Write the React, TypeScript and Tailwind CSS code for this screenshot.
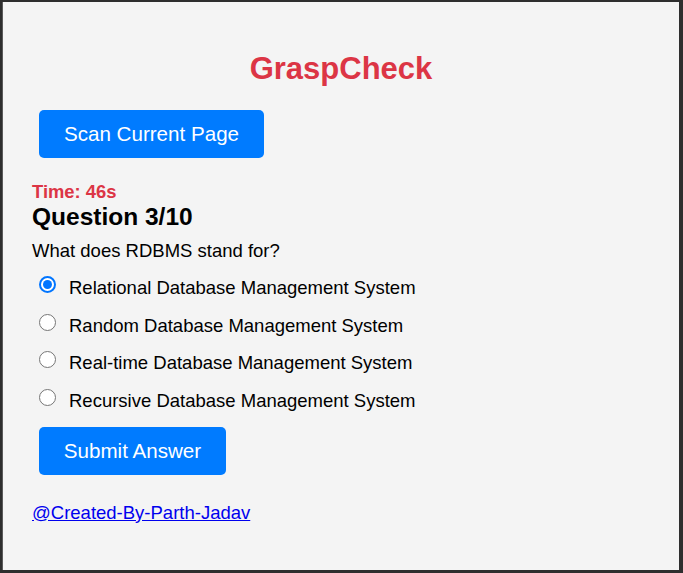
import React from "react";

const options = [
  "Relational Database Management System",
  "Random Database Management System",
  "Real-time Database Management System",
  "Recursive Database Management System",
];

export default function App() {
  return (
    <div
      className="w-[683px] h-[573px] bg-[#2e2e2e] pt-[2px] pl-[2px] pr-[4px] pb-[3px] overflow-hidden"
      style={{ fontFamily: '"Liberation Sans", Arial, sans-serif' }}
    >
      <div className="w-full h-full bg-[#f4f4f4] border-l border-[#5a5a5a] flex flex-col pl-[29px]">
        <h1 className="mt-[50px] h-[34px] leading-[34px] text-[31px] font-bold text-[#dc3545] text-center pr-[29px]">
          GraspCheck
        </h1>
        <button className="mt-[24px] ml-[7px] w-[225px] h-[48px] rounded-[5px] bg-[#007bff] text-white text-[20.6px] leading-[24px] flex items-center justify-center">
          Scan Current Page
        </button>
        <div className="mt-[23px] h-[21px] leading-[21px] text-[18.4px] font-bold text-[#dc3545]">
          Time: 46s
        </div>
        <div className="h-[29px] leading-[29px] text-[24.5px] font-bold text-black">
          Question 3/10
        </div>
        <div className="mt-[9px] h-[21px] leading-[21px] text-[18.5px] text-black">
          What does RDBMS stand for?
        </div>
        <div className="mt-[16px] flex flex-col gap-[16.6px]">
          {options.map((o, i) => (
            <div key={o} className="flex items-start h-[21px]">
              {i === 0 ? (
                <span className="mt-[-1px] ml-[7px] w-[17px] h-[17px] shrink-0 rounded-full border-[2px] border-[#0075ff] bg-white flex items-center justify-center">
                  <span className="w-[9px] h-[9px] rounded-full bg-[#0075ff]" />
                </span>
              ) : (
                <span className="mt-[-1px] ml-[7px] w-[17px] h-[17px] shrink-0 rounded-full border-[1.5px] border-[#767676] bg-white" />
              )}
              <span className="ml-[13px] leading-[21px] text-[18.5px] text-black whitespace-nowrap">
                {o}
              </span>
            </div>
          ))}
        </div>
        <button className="mt-[16px] ml-[7px] w-[187px] h-[48px] rounded-[5px] bg-[#007bff] text-white text-[20.6px] leading-[24px] flex items-center justify-center">
          Submit Answer
        </button>
        <a
          href="#"
          className="mt-[27px] h-[21px] leading-[21px] text-[18.5px] text-[#0000ee] underline self-start"
        >
          @Created-By-Parth-Jadav
        </a>
      </div>
    </div>
  );
}
